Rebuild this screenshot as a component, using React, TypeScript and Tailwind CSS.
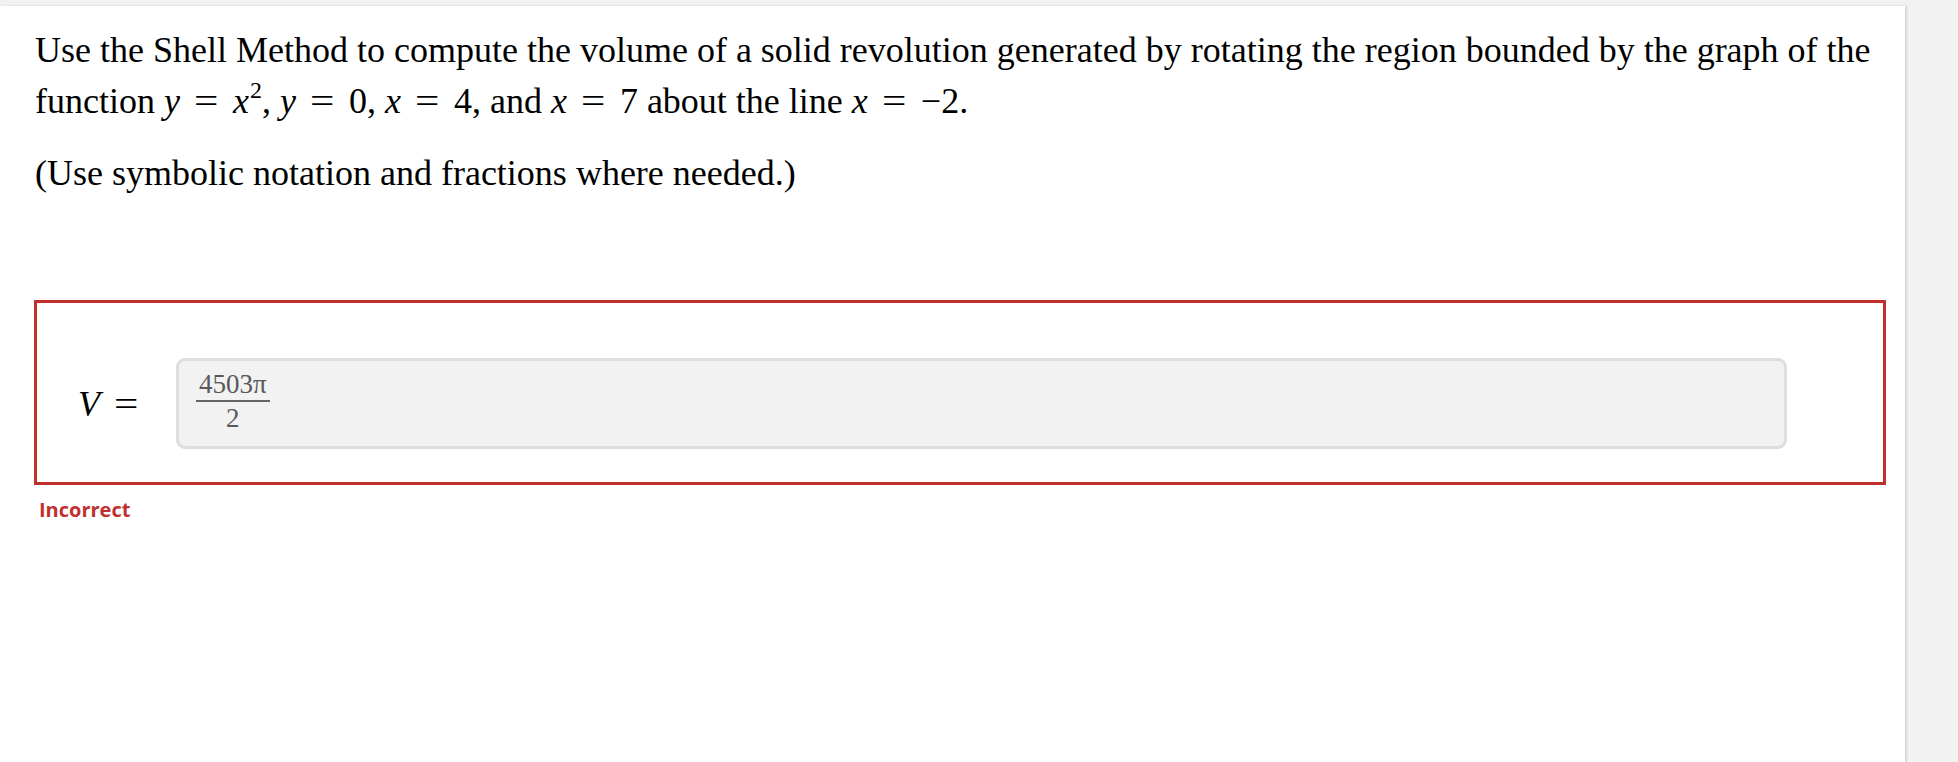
import React from "react";

const serif = { fontFamily: '"Liberation Serif", "Times New Roman", serif' };

function Eq() {
  return (
    <span className="inline-block w-[25px] mx-[5px] text-center">
      <span className="inline-block scale-x-[1.2]">=</span>
    </span>
  );
}

export default function App() {
  return (
    <div className="min-h-screen bg-[#f2f2f2] flex flex-col pt-[6px]">
      <div className="flex-1 w-[1905px] bg-white shadow-[2px_0_2px_rgba(0,0,0,0.12)] pl-[34px] pt-[19px]">
        <div className="text-[36px] leading-[51px] text-black pl-[1px]" style={serif}>
          <p>
            <span className="whitespace-nowrap">
              Use the Shell Method to compute the volume of a solid revolution generated by
              rotating the region bounded by the graph of the
            </span>
            <br />
            function <i>y</i> <Eq /> <i>x</i>
            <sup className="text-[24px] not-italic top-[-15px] ml-[1px]">2</sup>, <i>y</i> <Eq /> 0,{" "}
            <i>x</i> <Eq /> 4, and <i>x</i> <Eq /> 7 about the line <i>x</i> <Eq /> −2.
          </p>
          <p className="mt-[21px]">(Use symbolic notation and fractions where needed.)</p>
        </div>

        <div className="mt-[101px] w-[1852px] border-[3px] border-[#c0302f] pt-[55px] pb-[33px] flex items-center">
          <div className="w-[139px] pl-[41px] flex items-center text-[36px] text-black" style={serif}>
            <i>V</i>
            <span className="ml-[14px] inline-block w-[25px] text-center">
              <span className="inline-block scale-x-[1.2]">=</span>
            </span>
          </div>
          <div className="w-[1611px] h-[91px] rounded-[9px] border-[3px] border-[#dedede] bg-[#f2f2f2] flex items-center pl-[17px]">
            <div className="inline-flex flex-col items-center text-[#595959] mt-[-5px]" style={serif}>
              <span className="px-[3px] text-[27px] leading-[26px]">4503π</span>
              <span className="block h-[2px] w-full bg-[#666666] mt-[3px]"></span>
              <span className="text-[27px] leading-[26px] mt-[3px]">2</span>
            </div>
          </div>
        </div>

        <div
          className="mt-[10px] pl-[5px] text-[20px] leading-[30px] font-bold text-[#c0302f]"
          style={{ fontFamily: '"Open Sans", Lato, sans-serif' }}
        >
          Incorrect
        </div>
      </div>
    </div>
  );
}
